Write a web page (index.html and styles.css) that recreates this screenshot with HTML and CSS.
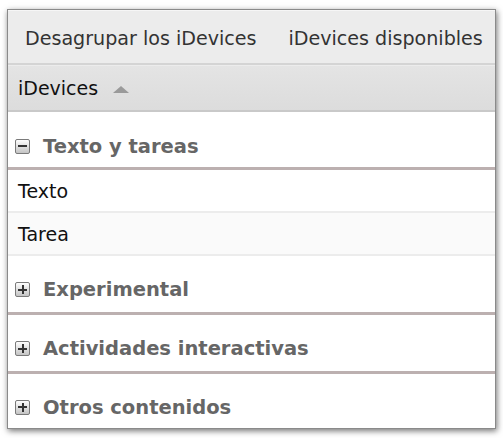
FILE: index.html
```html
<!DOCTYPE html>
<html lang="es">
<head>
<meta charset="utf-8">
<link rel="stylesheet" href="styles.css">
</head>
<body>
<div class="panel">
  <div class="toolbar">
    <span class="tb-btn">Desagrupar los iDevices</span>
    <span class="tb-btn">iDevices disponibles</span>
  </div>
  <div class="colhead">
    <span>iDevices</span>
    <span class="sort"></span>
  </div>
  <div class="group open">
    <span class="toggle minus"></span>
    <span class="gtitle">Texto y tareas</span>
  </div>
  <div class="row">Texto</div>
  <div class="row alt">Tarea</div>
  <div class="group">
    <span class="toggle plus"></span>
    <span class="gtitle">Experimental</span>
  </div>
  <div class="group">
    <span class="toggle plus"></span>
    <span class="gtitle">Actividades interactivas</span>
  </div>
  <div class="group last">
    <span class="toggle plus"></span>
    <span class="gtitle">Otros contenidos</span>
  </div>
</div>
</body>
</html>
```

FILE: styles.css
```css
html, body {
  margin: 0;
  padding: 0;
  background: #ffffff;
}
body {
  font-family: "DejaVu Sans", sans-serif;
  padding: 9px 7px 9px 7px;
}
.panel {
  border: 1px solid #8a8a8a;
  background: #fff;
  box-shadow: 1px 2px 6px rgba(0,0,0,0.55);
  height: 420px;
  box-sizing: border-box;
  overflow: hidden;
}
.toolbar {
  display: flex;
  align-items: center;
  height: 55px;
  background: #ececec;
  border-top: 1px solid #f6f6f6;
  border-bottom: 2px solid #d4d4d4;
  box-sizing: border-box;
  padding-left: 1px;
  padding-top: 2px;
  white-space: nowrap;
}
.tb-btn {
  flex: none;
  padding: 0 16px;
  font-size: 19.1px;
  color: #333;
}
.colhead {
  height: 47px;
  box-sizing: border-box;
  background: linear-gradient(#e4e4e4, #dcdcdc);
  border-top: 1px solid #ececec;
  border-bottom: 2px solid #c9c9c9;
  display: flex;
  align-items: center;
  padding-left: 10px;
  font-size: 19px;
  color: #111;
}
.sort {
  width: 0;
  height: 0;
  margin-left: 15px;
  margin-top: 2px;
  border-left: 8px solid transparent;
  border-right: 8px solid transparent;
  border-bottom: 7px solid #9a9a9a;
}
.group {
  height: 59px;
  box-sizing: border-box;
  display: flex;
  align-items: center;
  padding-left: 7px;
  padding-top: 11px;
  border-bottom: 3px solid #bcb0b0;
}
.group.open {
  height: 58px;
  padding-top: 13px;
}
.group.last {
  border-bottom: none;
  padding-top: 7px;
}
.gtitle {
  font-weight: bold;
  font-size: 19.5px;
  color: #666;
  margin-left: 13px;
}
.toggle {
  width: 15px;
  height: 15px;
  box-sizing: border-box;
  border: 1px solid #7a7a7a;
  border-radius: 2px;
  background: linear-gradient(#fdfdfd, #c4c4c4);
  position: relative;
}
.toggle::before {
  content: "";
  position: absolute;
  left: 2px;
  right: 2px;
  top: 5.5px;
  height: 2px;
  background: #333;
}
.toggle.plus::after {
  content: "";
  position: absolute;
  top: 2px;
  bottom: 2px;
  left: 5.5px;
  width: 2px;
  background: #333;
}
.row {
  height: 43px;
  box-sizing: border-box;
  display: flex;
  align-items: center;
  padding-left: 10px;
  padding-top: 1px;
  font-size: 19px;
  color: #111;
  border-bottom: 2px solid #ececec;
}
.row.alt {
  background: #fafafa;
}
```
